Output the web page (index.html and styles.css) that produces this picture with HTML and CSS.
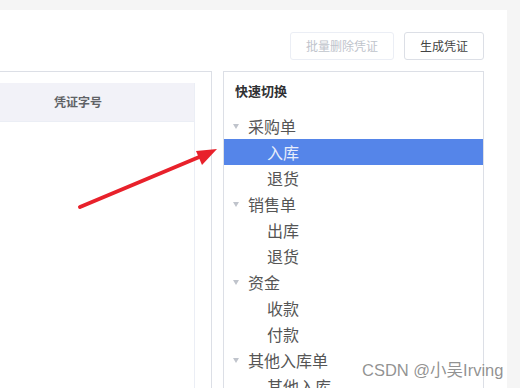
FILE: index.html
```html
<!DOCTYPE html>
<html lang="zh-CN">
<head>
    <meta charset="UTF-8">
    <meta name="viewport" content="width=device-width, initial-scale=1.0">
    <title>凭证</title>
    <link rel="stylesheet" href="styles.css">
</head>
<body>
    <div class="panel">
        <div class="toolbar">
            <button class="btn btn-disabled">批量删除凭证</button>
            <button class="btn">生成凭证</button>
        </div>

        <div class="content">
            <div class="list-box">
                <div class="table">
                    <div class="table-head">凭证字号</div>
                    <div class="table-body"></div>
                </div>
            </div>

            <div class="switch-box">
                <div class="switch-title">快速切换</div>
                <ul class="tree">
                    <li class="node parent"><span class="caret"></span>采购单</li>
                    <li class="node child active">入库</li>
                    <li class="node child">退货</li>
                    <li class="node parent"><span class="caret"></span>销售单</li>
                    <li class="node child">出库</li>
                    <li class="node child">退货</li>
                    <li class="node parent"><span class="caret"></span>资金</li>
                    <li class="node child">收款</li>
                    <li class="node child">付款</li>
                    <li class="node parent"><span class="caret"></span>其他入库单</li>
                    <li class="node child">其他入库</li>
                </ul>
            </div>
        </div>
    </div>

    <!-- 标注箭头 -->
    <svg class="arrow" width="520" height="388" viewBox="0 0 520 388">
        <line x1="80" y1="207" x2="204" y2="155" stroke="#e8212b" stroke-width="4" stroke-linecap="round"/>
        <polygon points="217,149 196,151 202,165" fill="#e8212b"/>
    </svg>

    <div class="watermark">CSDN @小吴Irving</div>
</body>
</html>
```

FILE: styles.css
```css
body {
    margin: 0;
    background-color: #f5f5f5;
    font-family: "Noto Sans CJK SC", "Noto Sans", sans-serif;
    overflow: hidden;
    height: 388px;
    position: relative;
}

.panel {
    margin-top: 10px;
    width: 507px;
    height: 378px;
    background-color: #ffffff;
    padding: 22px 23px 0 0;
    box-sizing: border-box;
}

.toolbar {
    display: flex;
    justify-content: flex-end;
    gap: 10px;
    height: 28px;
}

.btn {
    height: 28px;
    padding: 0 15px;
    font-family: "Noto Sans CJK SC", sans-serif;
    font-size: 12px;
    line-height: 26px;
    color: #444;
    background-color: #fff;
    border: 1px solid #dcdfe6;
    border-radius: 3px;
}

.btn-disabled {
    color: #c0c4cc;
    border-color: #ebeef5;
}

.content {
    display: flex;
    gap: 11px;
    margin-top: 11px;
    margin-left: -50px;
}

.list-box {
    width: 262px;
    height: 330px;
    box-sizing: border-box;
    border: 1px solid #dcdfe6;
    padding: 11px 16px 0 11px;
}

.table {
    height: 100%;
    border-right: 1px solid #ebeef5;
}

.table-head {
    height: 38px;
    line-height: 38px;
    background-color: #f2f2f8;
    border-bottom: 1px solid #ebeef5;
    text-align: center;
    font-size: 12px;
    font-weight: bold;
    color: #606266;
}

.switch-box {
    flex: 1;
    height: 330px;
    box-sizing: border-box;
    border: 1px solid #dcdfe6;
    padding-top: 9px;
}

.switch-title {
    padding-left: 11px;
    font-size: 13px;
    font-weight: bold;
    line-height: 20px;
    color: #303133;
}

.tree {
    list-style: none;
    margin: 12px 0 0 0;
    padding: 0;
}

.node {
    height: 26px;
    line-height: 26px;
    font-size: 16px;
    color: #555;
    display: flex;
    align-items: center;
}

.parent {
    padding-left: 9px;
}

.child {
    padding-left: 43px;
}

.caret {
    width: 0;
    height: 0;
    border-left: 3.5px solid transparent;
    border-right: 3.5px solid transparent;
    border-top: 5px solid #c0c4cc;
    margin-right: 9px;
}

.active {
    background-color: #5585e9;
    color: #e9eefb;
}

.arrow {
    position: absolute;
    top: 0;
    left: 0;
    pointer-events: none;
}

.watermark {
    position: absolute;
    left: 362px;
    top: 358px;
    font-family: "Liberation Sans", "Noto Sans CJK SC", sans-serif;
    font-size: 16.5px;
    line-height: 24px;
    color: rgba(110, 110, 110, 0.75);
    text-shadow: 0 0 2px #fff;
}
```
